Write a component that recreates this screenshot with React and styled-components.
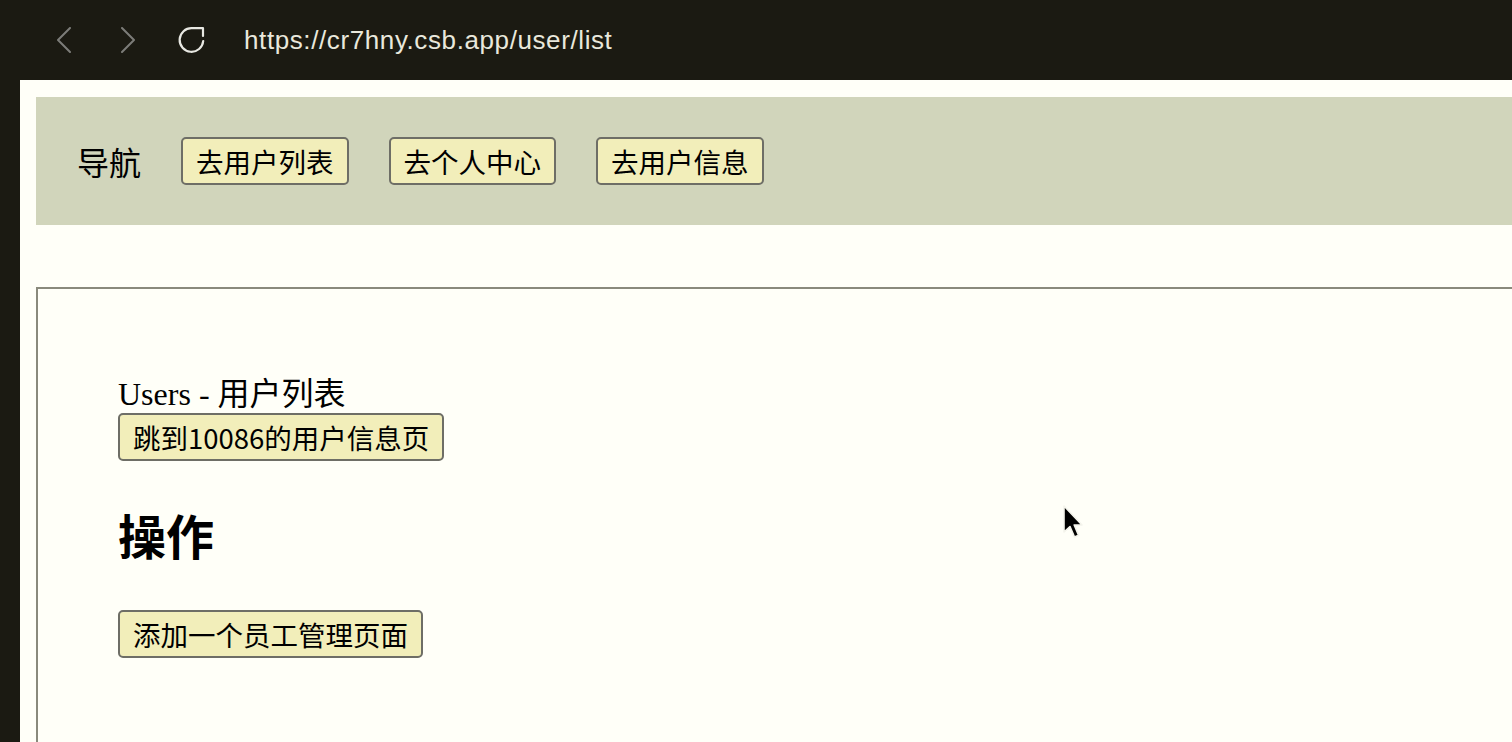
import React from "react";
import styled, { createGlobalStyle } from "styled-components";

const Global = createGlobalStyle`
  html, body { margin: 0; padding: 0; }
  body {
    background: #1b1a12;
    font-family: "Liberation Serif", "Noto Sans CJK SC", serif;
    overflow: hidden;
  }
`;

const Frame = styled.div`
  position: relative;
  width: 1512px;
  height: 742px;
  overflow: hidden;
  background: #1b1a12;
`;

const BrowserBar = styled.div`
  height: 80px;
  display: flex;
  align-items: center;
  padding-left: 57px;
  box-sizing: border-box;
`;

const NavIcon = styled.svg`
  display: block;
  flex: none;
  margin-right: ${(p) => p.$gap}px;
`;

const Url = styled.span`
  font-family: "Liberation Sans", "Noto Sans", sans-serif;
  font-size: 26px;
  letter-spacing: 0.6px;
  color: #e9e8dc;
  line-height: 1;
`;

const Viewport = styled.div`
  margin-left: 20px;
  height: 662px;
  background: #fffff8;
  padding: 17px 0 0 16px;
  box-sizing: border-box;
`;

const NavBar = styled.nav`
  height: 128px;
  background: #d1d5bb;
  display: flex;
  align-items: center;
  gap: 40px;
  padding-left: 41px;
`;

const NavLabel = styled.span`
  font-size: 32px;
  color: #000;
`;

const Button = styled.button`
  font-family: "Noto Sans CJK SC", "Noto Sans", sans-serif;
  font-size: 27.5px;
  line-height: 32px;
  color: #000;
  background: #f2eeba;
  border: 2px solid #6e6e66;
  border-radius: 5px;
  padding: 6px 13px;
  margin: 0;
  cursor: default;
  display: block;
`;

const Panel = styled.section`
  margin-top: 62px;
  border: 2px solid #8a8a7c;
  border-right: none;
  height: 700px;
  padding: 86px 0 0 80px;
  box-sizing: border-box;
`;

const Title = styled.div`
  font-size: 32px;
  line-height: 38px;
  color: #000;
`;

const Heading = styled.h2`
  font-family: "Liberation Serif", "Noto Sans CJK SC", serif;
  font-size: 48px;
  font-weight: 700;
  line-height: 60px;
  margin: 48px 0 41px;
  color: #000;
`;

const Cursor = styled.svg`
  position: absolute;
  left: 1062px;
  top: 504px;
`;

export default function App() {
  return (
    <Frame>
      <Global />
      <BrowserBar>
        <NavIcon $gap={50} width="14" height="26" viewBox="0 0 14 26">
          <polyline points="13,1 1,13 13,25" fill="none" stroke="#7c7c78" strokeWidth="2" strokeLinecap="round" strokeLinejoin="round" />
        </NavIcon>
        <NavIcon $gap={43} width="14" height="26" viewBox="0 0 14 26">
          <polyline points="1,1 13,13 1,25" fill="none" stroke="#7c7c78" strokeWidth="2" strokeLinecap="round" strokeLinejoin="round" />
        </NavIcon>
        <NavIcon $gap={38} width="28" height="28" viewBox="0 0 28 28">
          <path d="M25.2 15 A11.8 11.8 0 1 1 14 2.2 H25 V10" fill="none" stroke="#e8e8e2" strokeWidth="2.2" strokeLinecap="round" strokeLinejoin="round" />
        </NavIcon>
        <Url>https://cr7hny.csb.app/user/list</Url>
      </BrowserBar>
      <Viewport>
        <NavBar>
          <NavLabel>导航</NavLabel>
          <Button>去用户列表</Button>
          <Button>去个人中心</Button>
          <Button>去用户信息</Button>
        </NavBar>
        <Panel>
          <Title>Users - 用户列表</Title>
          <Button>跳到10086的用户信息页</Button>
          <Heading>操作</Heading>
          <Button>添加一个员工管理页面</Button>
        </Panel>
      </Viewport>
      <Cursor width="24" height="38" viewBox="0 0 24 38">
        <path d="M2 2 L2 28 L8 22.5 L12.5 33 L16.5 31.3 L12.2 21 L20 21 Z" fill="#000" stroke="#f4f4ec" strokeWidth="1.6" strokeLinejoin="round" />
      </Cursor>
    </Frame>
  );
}
